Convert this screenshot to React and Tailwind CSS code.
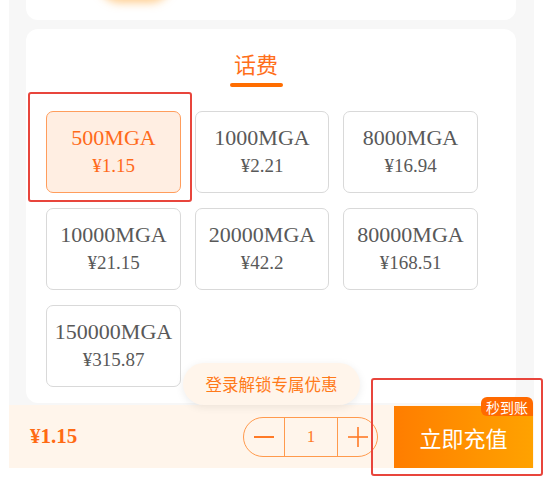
import React from 'react';

const items = [
  { name: '500MGA', price: '¥1.15', active: true },
  { name: '1000MGA', price: '¥2.21' },
  { name: '8000MGA', price: '¥16.94' },
  { name: '10000MGA', price: '¥21.15' },
  { name: '20000MGA', price: '¥42.2' },
  { name: '80000MGA', price: '¥168.51' },
  { name: '150000MGA', price: '¥315.87' },
];

const serif = { fontFamily: '"Liberation Serif", "Times New Roman", serif' };
const cjk = { fontFamily: '"Noto Sans CJK SC", "Noto Sans", sans-serif' };

function App() {
  return (
    <div className="relative w-[554px] h-[480px] bg-white overflow-hidden">
      <div className="ml-[9px] w-[525px] bg-[#f7f7f7]">
        {/* top card (cut off) */}
        <div className="relative ml-[17px] w-[490px] h-[20px] bg-white rounded-b-[12px] overflow-hidden">
          <div className="absolute left-[72px] top-[-44px] w-[74px] h-[44px] rounded-full bg-white shadow-[0_3px_9px_rgba(255,170,60,0.55)]" />
        </div>

        {/* recharge card */}
        <div className="mt-[9px] ml-[17px] w-[490px] bg-white rounded-[12px] pt-[19px] pb-[16px]">
          <div className="flex flex-col items-center pr-[30px]">
            <div className="text-[22px] leading-[30px] text-[#ff6f1a]" style={cjk}>话费</div>
            <div className="mt-[5px] w-[53px] h-[4px] rounded-full bg-[#ff6d00]" />
          </div>
          <div className="mt-[24px] ml-[20px] grid grid-cols-[135px_134px_135px] gap-x-[14px] gap-y-[15px]">
            {items.map((it) => (
              <div
                key={it.name}
                className={`h-[82px] rounded-[7px] border flex flex-col items-center justify-center ${
                  it.active
                    ? 'bg-[#ffeee2] border-[#ff9d5c] text-[#ff6a1a]'
                    : 'bg-white border-[#d9d9d9] text-[#595959]'
                }`}
                style={serif}
              >
                <div className="text-[22px] leading-[28px]">{it.name}</div>
                <div className="text-[19px] leading-[28px]">{it.price}</div>
              </div>
            ))}
          </div>
        </div>

        {/* bottom bar */}
        <div className="mt-[2px] h-[63px] bg-[#fff5eb] flex items-center pl-[21px]">
          <div className="text-[21px] font-bold text-[#ff6a13]" style={serif}>¥1.15</div>
          <div className="ml-auto flex items-stretch h-[40px] w-[135px] rounded-full border border-[#ff9a4d]">
            <div className="w-[40px] flex items-center justify-center">
              <svg width="20" height="20" viewBox="0 0 20 20">
                <line x1="0" y1="10" x2="20" y2="10" stroke="#ff7a26" strokeWidth="2" />
              </svg>
            </div>
            <div className="w-[54px] border-x border-[#ff9a4d] flex items-center justify-center text-[17px] text-[#ff7a26]" style={serif}>
              1
            </div>
            <div className="flex-1 flex items-center justify-center">
              <svg width="20" height="20" viewBox="0 0 20 20">
                <line x1="0" y1="10" x2="20" y2="10" stroke="#ff7a26" strokeWidth="1.6" />
                <line x1="10" y1="0" x2="10" y2="20" stroke="#ff7a26" strokeWidth="1.6" />
              </svg>
            </div>
          </div>
          <div className="relative ml-[16px] mr-[1px] w-[139px] h-[62px] self-end bg-gradient-to-r from-[#ff7d00] to-[#ffa200] flex items-center justify-center">
            <span className="text-white text-[22px]" style={cjk}>立即充值</span>
            <div className="absolute right-0 top-[-9px] w-[52px] h-[19px] rounded-[6px] rounded-br-none bg-[#ff6a00] flex items-center justify-center text-white text-[14px] leading-none" style={cjk}>
              秒到账
            </div>
          </div>
        </div>
      </div>

      {/* login tip */}
      <div className="absolute left-[183px] top-[363px] w-[177px] h-[42px] rounded-full bg-[#fff5eb] shadow-[0_2px_8px_rgba(0,0,0,0.08)] flex items-center justify-center">
        <span className="text-[16.5px] text-[#ff7a1a]" style={cjk}>登录解锁专属优惠</span>
      </div>

      {/* annotation frames */}
      <div className="absolute left-[28px] top-[92px] w-[164px] h-[110px] border-2 border-[#e8453c] rounded-[3px]" />
      <div className="absolute left-[371px] top-[378px] w-[172px] h-[98px] border-2 border-[#e8453c] rounded-[3px]" />
    </div>
  );
}

export default App;
